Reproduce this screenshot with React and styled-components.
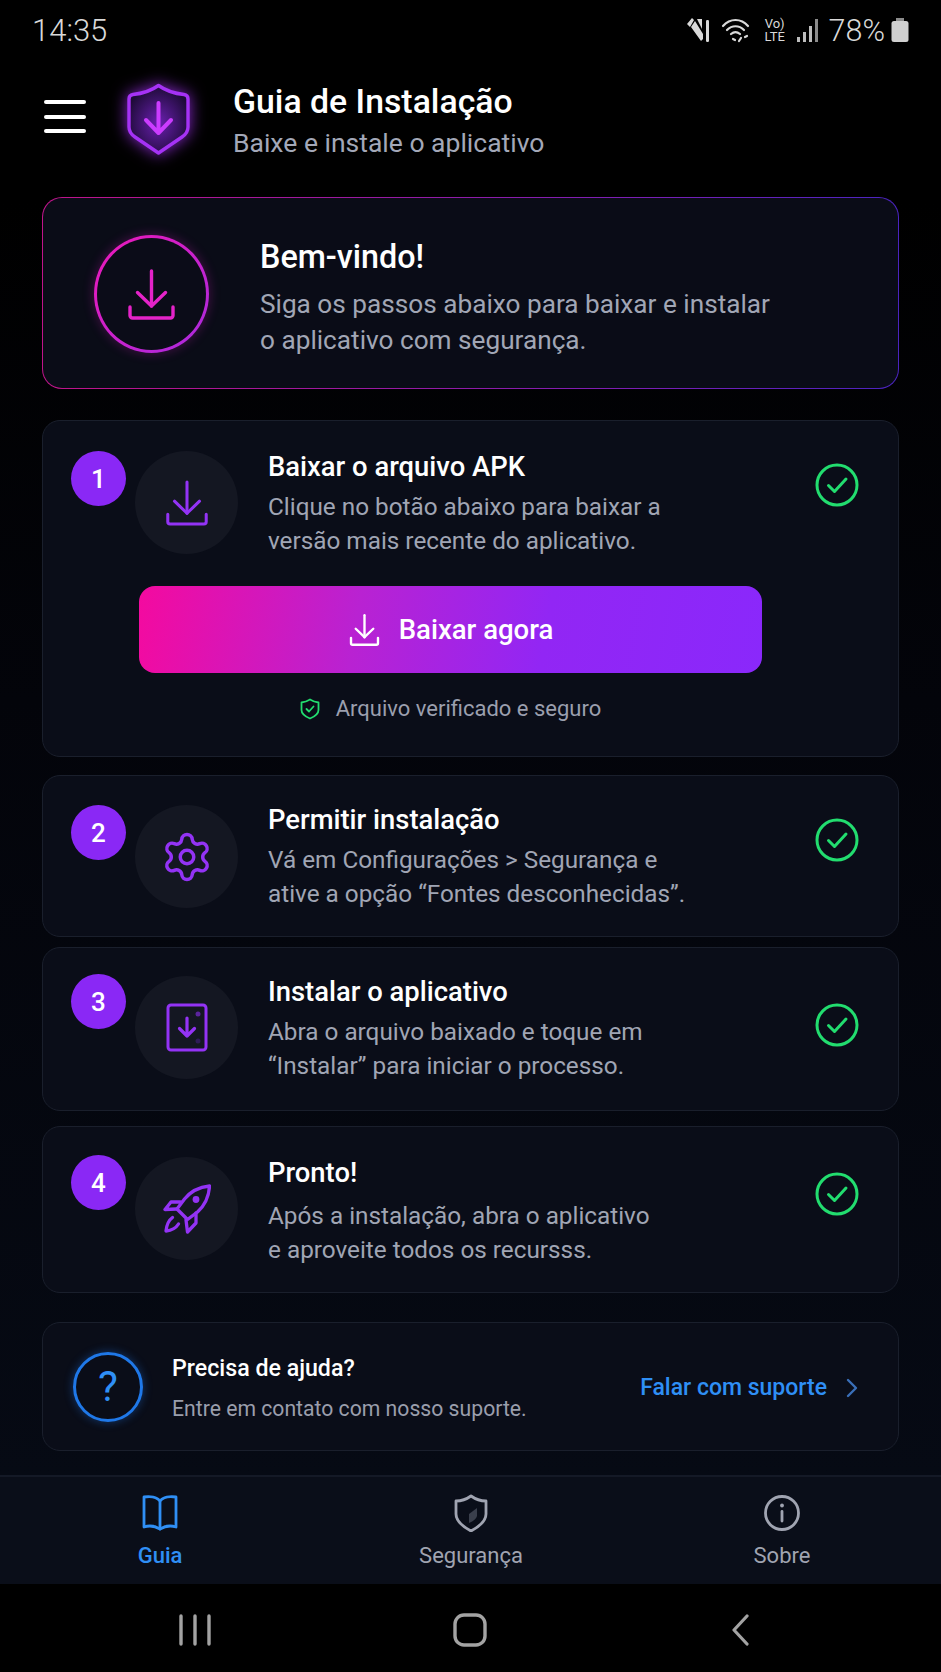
import React from "react";
import styled, { createGlobalStyle } from "styled-components";
import { Settings } from "lucide-react";

const Global = createGlobalStyle`
  html, body { margin: 0; padding: 0; background: #000; }
  * { box-sizing: border-box; }
`;

const Page = styled.div`
  width: 941px;
  height: 1672px;
  overflow: hidden;
  display: flex;
  flex-direction: column;
  font-family: Roboto, "Liberation Sans", sans-serif;
  color: #fff;
  background: linear-gradient(180deg, #000 0, #000 200px, #03040a 700px, #060a14 1475px);
`;

const StatusBar = styled.div`
  height: 60px;
  padding: 0 32px;
  display: flex;
  align-items: center;
  justify-content: space-between;
  color: #d9d9d9;
`;

const Clock = styled.span`
  font-size: 31px;
  font-weight: 300;
`;

const StatusIcons = styled.div`
  display: flex;
  align-items: center;
`;

const Volte = styled.span`
  width: 24px;
  margin: 0 10px 0 12px;
  font-size: 13px;
  line-height: 13px;
  text-align: center;
`;

const Battery = styled.span`
  font-size: 30.5px;
  font-weight: 300;
  margin: 0 6px 0 9px;
`;

const Header = styled.header`
  height: 137px;
  padding: 23px 0 0 44px;
  display: flex;
  align-items: flex-start;
`;

const Burger = styled.button`
  width: 42px;
  height: 33px;
  margin-top: 17px;
  padding: 0;
  border: 0;
  background: none;
  display: flex;
  flex-direction: column;
  justify-content: space-between;

  i {
    display: block;
    height: 4px;
    border-radius: 2px;
    background: #fff;
  }
`;

const HeaderLogo = styled.svg`
  width: 63px;
  height: 72px;
  margin-left: 41px;
  overflow: visible;
  filter: drop-shadow(0 0 8px rgba(170, 50, 255, 0.8));
`;

const HeaderText = styled.div`
  margin: 0 0 0 43px;
`;

const HeaderTitle = styled.h1`
  margin: 0;
  font-size: 33.8px;
  line-height: 38px;
  font-weight: 500;
`;

const HeaderSub = styled.p`
  margin: 7px 0 0;
  font-size: 26.5px;
  line-height: 30px;
  color: #a3a8b8;
`;

const Main = styled.main`
  flex: 1;
  padding: 0 42px;
`;

const Welcome = styled.section`
  height: 192px;
  padding: 37px 0 0 51px;
  display: flex;
  border: 1px solid transparent;
  border-radius: 20px;
  background:
    linear-gradient(#0a0c17, #0a0c17) padding-box,
    linear-gradient(90deg, #c0148a, #7a1fb5 70%, #4a24c0) border-box;
`;

const WelcomeRing = styled.div`
  width: 115px;
  height: 118px;
  flex: none;
  border: 3px solid transparent;
  border-radius: 50%;
  display: flex;
  align-items: center;
  justify-content: center;
  background:
    linear-gradient(#0b0c18, #0b0c18) padding-box,
    linear-gradient(135deg, #ee18b8, #a92be0) border-box;
  box-shadow: 0 0 12px rgba(220, 30, 200, 0.3);
`;

const WelcomeText = styled.div`
  margin: 4px 0 0 51px;
`;

const WelcomeTitle = styled.h2`
  margin: 0;
  font-size: 32.3px;
  line-height: 36px;
  font-weight: 500;
`;

const WelcomeBody = styled.p`
  margin: 11px 0 0;
  font-size: 26.2px;
  line-height: 36px;
  color: #a1a6b5;
`;

const Card = styled.section`
  height: ${(p) => p.$h}px;
  margin-top: ${(p) => p.$gap}px;
  padding: ${(p) => p.$pad}px 39px 0 28px;
  border: 1px solid #1a1f2c;
  border-radius: 18px;
  background: #0a0d18;
`;

const StepRow = styled.div`
  display: flex;
  align-items: flex-start;
`;

const Badge = styled.div`
  width: 55px;
  height: 55px;
  flex: none;
  border-radius: 50%;
  background: #8a28f5;
  display: flex;
  align-items: center;
  justify-content: center;
  font-size: 26px;
  font-weight: 500;
`;

const IconDisc = styled.div`
  width: 103px;
  height: 103px;
  flex: none;
  margin: ${(p) => p.$drop}px 0 0 9px;
  border-radius: 50%;
  background: #141722;
  display: flex;
  align-items: center;
  justify-content: center;
  color: #9333f5;
`;

const StepText = styled.div`
  flex: 1;
  margin: ${(p) => p.$top}px 0 0 30px;
`;

const StepTitle = styled.h3`
  margin: 0;
  font-size: 27.4px;
  line-height: 34px;
  font-weight: 500;
`;

const StepBody = styled.p`
  margin: ${(p) => p.$gap}px 0 0;
  font-size: 24.3px;
  line-height: 34px;
  color: #a0a5b4;
`;

const CheckMark = styled.svg`
  width: 44px;
  height: 44px;
  flex: none;
  margin-top: ${(p) => p.$top}px;
`;

const DownloadButton = styled.button`
  width: 623px;
  height: 87px;
  margin: 28px 0 0 68px;
  border: 0;
  border-radius: 16px;
  display: flex;
  align-items: center;
  justify-content: center;
  gap: 18px;
  background: linear-gradient(100deg, #f40a9f 0, #b922d2 35%, #9226f4 65%, #8a28fb 100%);
  color: #fff;
  font-family: inherit;
  font-size: 27.5px;
  font-weight: 500;
`;

const SafeNote = styled.div`
  margin: 23px 0 0 68px;
  width: 623px;
  display: flex;
  align-items: center;
  justify-content: center;
  gap: 16px;
  font-size: 22px;
  color: #9b9fae;
`;

const HelpCard = styled.section`
  height: 129px;
  margin-top: 29px;
  padding: 0 40px 0 30px;
  display: flex;
  align-items: center;
  border: 1px solid #1a1f2c;
  border-radius: 18px;
  background: #0a0d18;
`;

const HelpRing = styled.div`
  width: 70px;
  height: 70px;
  flex: none;
  border: 3px solid #1f78e8;
  border-radius: 50%;
  display: flex;
  align-items: center;
  justify-content: center;
  font-size: 42px;
  font-weight: 400;
  color: #2f8ff5;
  box-shadow: 0 0 10px rgba(30, 120, 240, 0.4);
`;

const HelpText = styled.div`
  flex: 1;
  margin: 4px 0 0 29px;
`;

const HelpTitle = styled.h4`
  margin: 0;
  font-size: 23.2px;
  line-height: 28px;
  font-weight: 500;
`;

const HelpBody = styled.p`
  margin: 13px 0 0;
  font-size: 21.2px;
  line-height: 28px;
  color: #9a9eac;
`;

const HelpLink = styled.a`
  margin-top: 2px;
  font-size: 23px;
  font-weight: 500;
  color: #2f8ff5;
`;

const HelpChevron = styled.svg`
  width: 12px;
  height: 20px;
  margin: 2px 0 0 19px;
`;

const BottomNav = styled.nav`
  height: 109px;
  padding: 0 4px;
  display: grid;
  grid-template-columns: repeat(3, 311px);
  border-top: 2px solid #141926;
  background: #0a0e19;
`;

const NavItem = styled.a`
  padding: 17px 0 0 1px;
  display: flex;
  flex-direction: column;
  align-items: center;
  font-size: 22px;
  font-weight: ${(p) => (p.$active ? 500 : 400)};
  color: ${(p) => (p.$active ? "#2f8ff5" : "#a0a4b1")};

  svg {
    width: 38px;
    height: 38px;
    margin-bottom: 11px;
  }
`;

const SystemBar = styled.div`
  height: 88px;
  padding-top: 4px;
  background: #000;
  display: grid;
  grid-template-columns: 390px 160px 1fr;
  align-items: center;
  justify-items: center;
`;

const DownloadIcon = ({ w = 47, h = 51, sw = 3.4, color = "currentColor" }) => (
  <svg width={w} height={h} viewBox="0 0 47 51" fill="none" stroke={color} strokeWidth={sw} strokeLinecap="round" strokeLinejoin="round">
    <path d="M23.5 2V37" />
    <path d="M9.5 23.5 23.5 37 37.5 23.5" />
    <path d="M2 38v8.5a2.5 2.5 0 0 0 2.5 2.5h38a2.5 2.5 0 0 0 2.5-2.5V38" />
  </svg>
);

const TabletIcon = () => (
  <svg width="42" height="49" viewBox="0 0 42 49" fill="none" stroke="currentColor" strokeWidth="3" strokeLinecap="round" strokeLinejoin="round">
    <rect x="2" y="2" width="38" height="45" rx="3" />
    <path d="M21 15V33M13.5 25.5 21 33l7.5-7.5" strokeWidth="3.2" />
    <circle cx="32" cy="11" r="2.5" fill="#5b249e" stroke="none" />
    <circle cx="32" cy="38" r="2.5" fill="#2e1b58" stroke="none" />
  </svg>
);

const RocketIcon = () => (
  <svg width="48" height="50" viewBox="0 0 48 50" fill="none" stroke="currentColor" strokeWidth="3.3" strokeLinejoin="round" strokeLinecap="round">
    <path d="M46.5 2C37 3 28 7 21.5 15L14 25l10.5 10.5 10-7.5C42 21 46 12 46.5 2Z" />
    <circle cx="33" cy="15.5" r="3.4" fill="currentColor" stroke="none" />
    <path d="M17.5 18H8L2 25.5 13.5 25" />
    <path d="M33 29v10l-8.5 9-1.5-12" />
    <path d="M9.5 33.5C6 36 3.5 42 3 47c5-.5 10-3 12.5-7" />
  </svg>
);

const Check = ({ top }) => (
  <CheckMark $top={top} viewBox="0 0 44 44" fill="none" stroke="#22dd6f" strokeWidth="3" strokeLinecap="round" strokeLinejoin="round">
    <circle cx="22" cy="22" r="20" />
    <path d="M13.5 22.5 19.5 28.5 31 16" />
  </CheckMark>
);

const steps = [
  { n: 2, title: "Permitir instalação", lines: ["Vá em Configurações > Segurança e", "ative a opção “Fontes desconhecidas”."], icon: <Settings size={54} strokeWidth={1.55} />, h: 162, gap: 18, pad: 29, drop: 0, top: -2, body: 6, check: 13 },
  { n: 3, title: "Instalar o aplicativo", lines: ["Abra o arquivo baixado e toque em", "“Instalar” para iniciar o processo."], icon: <TabletIcon />, h: 164, gap: 10, pad: 26, drop: 2, top: 1, body: 6, check: 29 },
  { n: 4, title: "Pronto!", lines: ["Após a instalação, abra o aplicativo", "e aproveite todos os recursss."], icon: <RocketIcon />, h: 167, gap: 15, pad: 28, drop: 2, top: 1, body: 9, check: 17 },
];

export default function App() {
  return (
    <Page>
      <Global />
      <StatusBar>
        <Clock>14:35</Clock>
        <StatusIcons>
          <svg width="25" height="26" viewBox="0 0 25 26" fill="#d9d9d9">
            <path d="M1 7 6 1l2 2-4 7ZM5 10l4-6 8 13v5l-2 2Z" />
            <rect x="20" y="3" width="3" height="22" rx="1.2" />
            <path d="M11 2h5v10Z" />
          </svg>
          <svg width="30" height="26" viewBox="0 0 30 26" fill="none" stroke="#d9d9d9" strokeWidth="2.2" strokeLinecap="round" style={{ marginLeft: 10 }}>
            <path d="M2 9C9 1 20 1 27 9" />
            <path d="M6 13c5-5 12-5 17 0" />
            <path d="M10 17c3-2.5 6-2.5 9 0" />
            <path d="M12 22l2 1M18 24l2-3M24 20l2-1" />
          </svg>
          <Volte>Vo)<br />LTE</Volte>
          <svg width="23" height="26" viewBox="0 0 23 26" fill="#bdbdbd">
            <rect x="0" y="20" width="3" height="5" />
            <rect x="6" y="15" width="3" height="10" />
            <rect x="12" y="9" width="3" height="16" />
            <rect x="18" y="2" width="3" height="23" fill="#8c8c8c" />
          </svg>
          <Battery>78%</Battery>
          <svg width="18" height="26" viewBox="0 0 18 26">
            <path d="M5 1h8v4H5Z" fill="#8c8c8c" />
            <rect x="0.5" y="4" width="17" height="21" rx="2.5" fill="#d0d0d0" />
          </svg>
        </StatusIcons>
      </StatusBar>

      <Header>
        <Burger aria-label="Menu"><i /><i /><i /></Burger>
        <HeaderLogo viewBox="0 0 63 72">
          <defs>
            <radialGradient id="shieldFill" cx="0.5" cy="0.55" r="0.55">
              <stop offset="0" stopColor="#6a1fb0" />
              <stop offset="1" stopColor="#1e0b38" />
            </radialGradient>
          </defs>
          <path d="M31.5 2.5Q42 10 57 11.5 61 12 61 16V44Q61 50 55 54L31.5 70 8 54Q2 50 2 44V16Q2 12 6 11.5 21 10 31.5 2.5Z" fill="url(#shieldFill)" stroke="#a532f5" strokeWidth="3.4" strokeLinejoin="round" />
          <path d="M31.5 20V49M19 37 31.5 50 44 37" fill="none" stroke="#cb3cff" strokeWidth="4" strokeLinecap="round" strokeLinejoin="round" />
        </HeaderLogo>
        <HeaderText>
          <HeaderTitle>Guia de Instalação</HeaderTitle>
          <HeaderSub>Baixe e instale o aplicativo</HeaderSub>
        </HeaderText>
      </Header>

      <Main>
        <Welcome>
          <WelcomeRing><DownloadIcon color="#e423c8" /></WelcomeRing>
          <WelcomeText>
            <WelcomeTitle>Bem-vindo!</WelcomeTitle>
            <WelcomeBody>Siga os passos abaixo para baixar e instalar<br />o aplicativo com segurança.</WelcomeBody>
          </WelcomeText>
        </Welcome>

        <Card $h={337} $gap={31} $pad={30}>
          <StepRow>
            <Badge>1</Badge>
            <IconDisc $drop={0}><DownloadIcon w={42} h={46} /></IconDisc>
            <StepText $top={-1}>
              <StepTitle>Baixar o arquivo APK</StepTitle>
              <StepBody $gap={6}>Clique no botão abaixo para baixar a<br />versão mais recente do aplicativo.</StepBody>
            </StepText>
            <Check top={12} />
          </StepRow>
          <DownloadButton><DownloadIcon w={33} h={32} sw={3.8} />Baixar agora</DownloadButton>
          <SafeNote>
            <svg width="20" height="22" viewBox="0 0 20 22" fill="none" stroke="#22dd6f" strokeWidth="1.8" strokeLinecap="round" strokeLinejoin="round">
              <path d="M10 1.5Q14 4 18.5 4.5V12Q18.5 17 10 20.5 1.5 17 1.5 12V4.5Q6 4 10 1.5Z" />
              <path d="M6.5 11 9 13.5 13.5 8.5" />
            </svg>
            Arquivo verificado e seguro
          </SafeNote>
        </Card>

        {steps.map((s) => (
          <Card key={s.n} $h={s.h} $gap={s.gap} $pad={s.pad}>
            <StepRow>
              <Badge>{s.n}</Badge>
              <IconDisc $drop={s.drop}>{s.icon}</IconDisc>
              <StepText $top={s.top}>
                <StepTitle>{s.title}</StepTitle>
                <StepBody $gap={s.body}>{s.lines[0]}<br />{s.lines[1]}</StepBody>
              </StepText>
              <Check top={s.check} />
            </StepRow>
          </Card>
        ))}

        <HelpCard>
          <HelpRing>?</HelpRing>
          <HelpText>
            <HelpTitle>Precisa de ajuda?</HelpTitle>
            <HelpBody>Entre em contato com nosso suporte.</HelpBody>
          </HelpText>
          <HelpLink>Falar com suporte</HelpLink>
          <HelpChevron viewBox="0 0 12 20" fill="none" stroke="#3a6fb8" strokeWidth="2.4" strokeLinecap="round" strokeLinejoin="round">
            <path d="M2 2 10 10 2 18" />
          </HelpChevron>
        </HelpCard>
      </Main>

      <BottomNav>
        <NavItem $active>
          <svg viewBox="0 0 38 38" fill="none" stroke="#2f8ff5" strokeWidth="2.8" strokeLinejoin="round" strokeLinecap="round">
            <path d="M19 7C16 3 9 2 3 3V33C9 31 14 32 19 35 24 32 29 31 35 33V3C29 2 22 3 19 7Z" />
            <path d="M19 7V35" />
          </svg>
          Guia
        </NavItem>
        <NavItem>
          <svg viewBox="0 0 38 38" fill="none" stroke="#a0a4b1" strokeWidth="2.8" strokeLinejoin="round">
            <path d="M19 2Q26 7 34 7V20Q34 29 19 37 4 29 4 20V7Q12 7 19 2Z" />
            <path d="M25 14V22Q24 26 17 29V20Z" fill="#3a3f4c" stroke="none" />
          </svg>
          Segurança
        </NavItem>
        <NavItem>
          <svg viewBox="0 0 38 38" fill="none" stroke="#a0a4b1" strokeWidth="2.8" strokeLinecap="round">
            <circle cx="19" cy="19" r="16.5" />
            <path d="M19 17.5V27" />
            <circle cx="19" cy="11.5" r="1.9" fill="#a0a4b1" stroke="none" />
          </svg>
          Sobre
        </NavItem>
      </BottomNav>

      <SystemBar>
        <svg width="32" height="32" viewBox="0 0 32 32" stroke="#a3a3a3" strokeWidth="3.4" strokeLinecap="round">
          <path d="M2 2V30M16 2V30M30 2V30" />
        </svg>
        <svg width="34" height="34" viewBox="0 0 34 34" fill="none" stroke="#a3a3a3" strokeWidth="3.4">
          <rect x="2" y="2" width="30" height="30" rx="9" />
        </svg>
        <svg width="18" height="32" viewBox="0 0 18 32" fill="none" stroke="#a3a3a3" strokeWidth="3.2" strokeLinecap="round" strokeLinejoin="round" style={{ marginRight: 11 }}>
          <path d="M16 2 3 16 16 30" />
        </svg>
      </SystemBar>
    </Page>
  );
}
